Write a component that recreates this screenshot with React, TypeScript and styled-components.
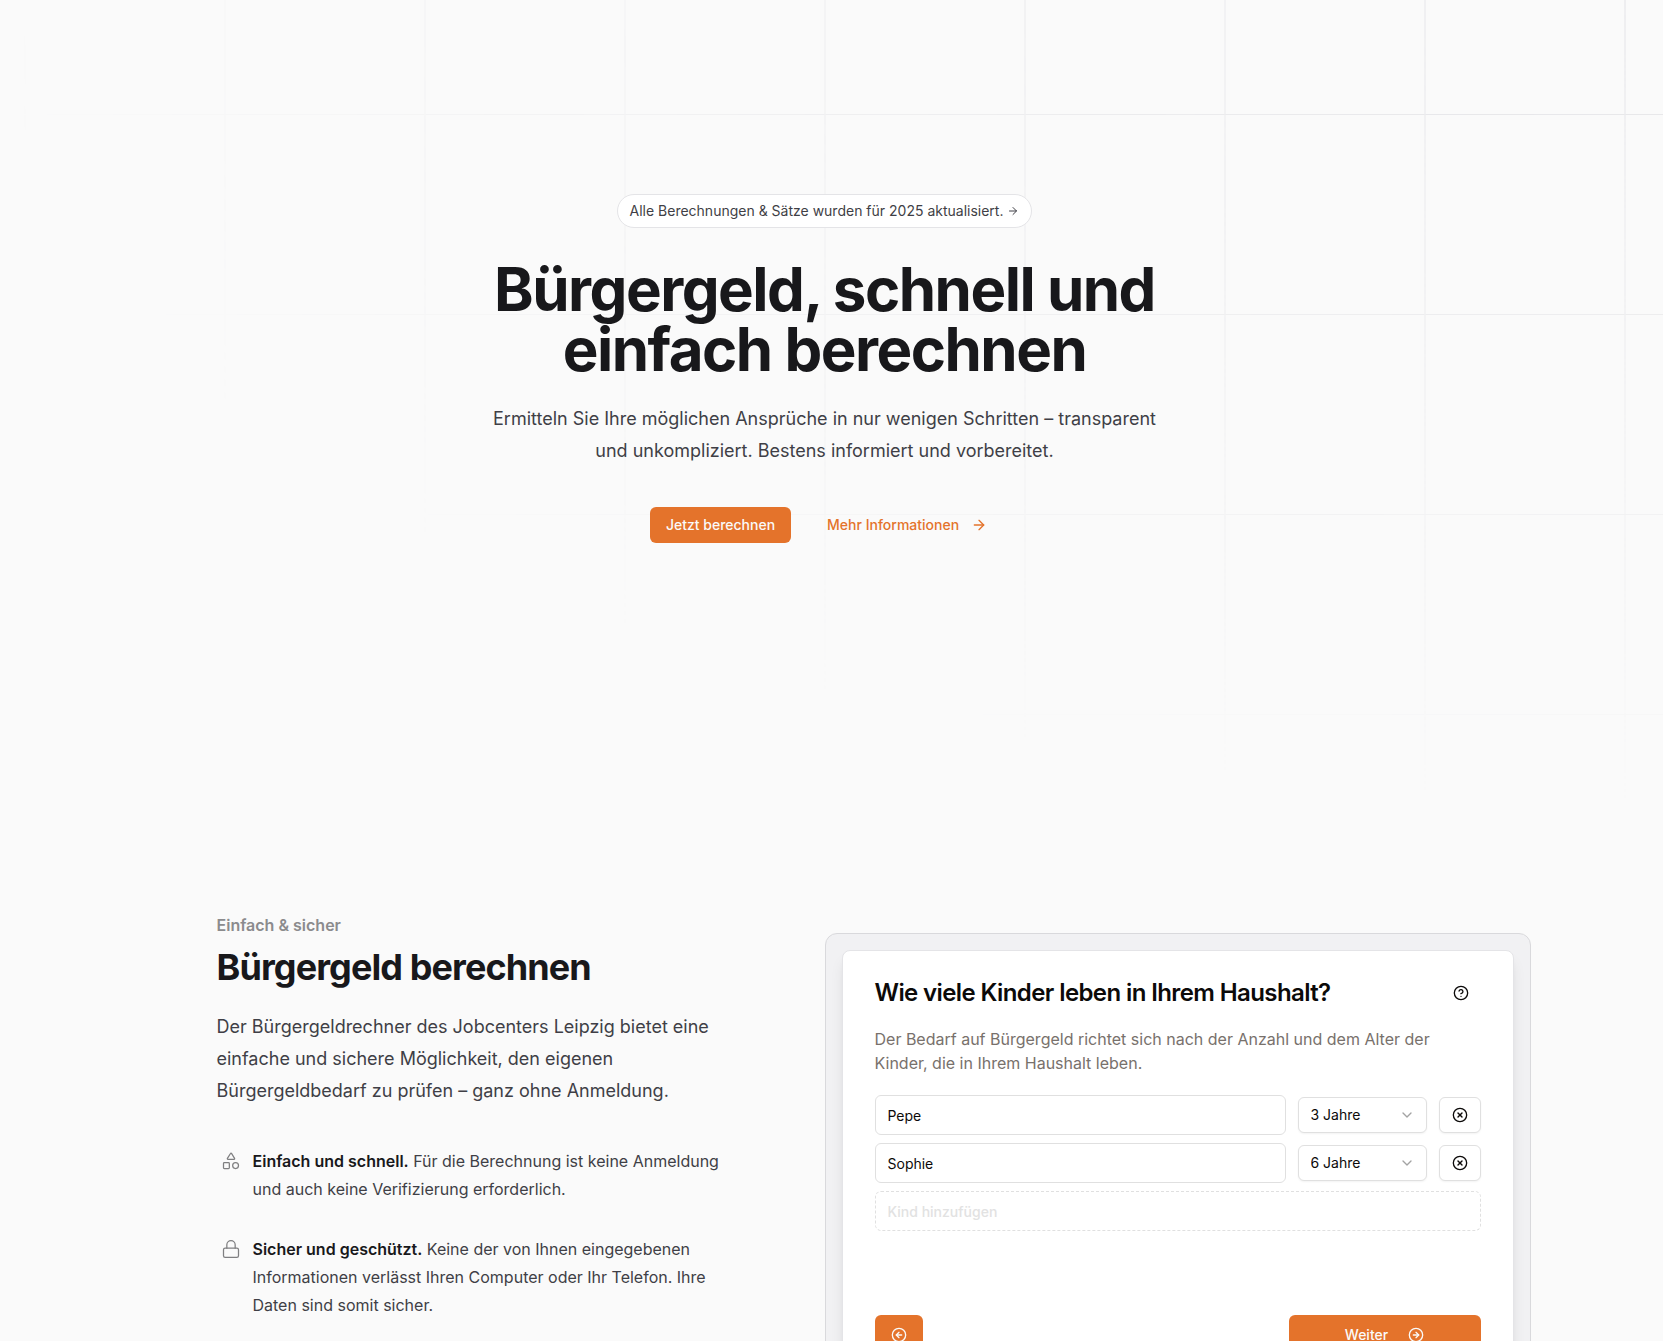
import React from 'react';
import styled, { createGlobalStyle } from 'styled-components';
import { ArrowRight, ChevronDown, CircleArrowLeft, CircleArrowRight, CircleHelp, CircleX, Lock, Shapes } from 'lucide-react';

const GlobalStyle = createGlobalStyle`
  *, *::before, *::after { box-sizing: border-box; }
  html { background: #fafafa; }
  body {
    margin: 0;
    background: #fafafa;
    color: #0c0a09;
    font-family: Inter, "Liberation Sans", sans-serif;
    font-size: 16px;
    line-height: 24px;
    -webkit-font-smoothing: antialiased;
  }
  h1, h2, h3, p, dl, dt, dd { margin: 0; }
  button, input, select { font: inherit; color: inherit; }
  a { color: inherit; text-decoration: none; }
`;

const Page = styled.div`
  position: relative;
  isolation: isolate;
  overflow: hidden;
  padding-right: 14px;
`;

const GridBackdrop = styled.svg`
  position: absolute;
  inset: 0;
  z-index: -1;
  width: 100%;
  height: 800px;
  stroke: #e4e4e7;
  mask-image: radial-gradient(100% 100% at top right, white, transparent);
`;

const Hero = styled.header`
  display: flex;
  flex-direction: column;
  align-items: center;
  max-width: 672px;
  margin: 0 auto;
  padding: 194px 0 368px;
  text-align: center;
`;

const Notice = styled.a`
  display: flex;
  align-items: center;
  gap: 4px;
  padding: 4px 12px;
  border: 1px solid #e4e4e7;
  border-radius: 17px;
  background: #ffffff;
  color: #3f3f46;
  font-size: 14px;
`;

const HeroTitle = styled.h1`
  margin-top: 31px;
  color: #18181b;
  font-size: 60px;
  font-weight: 700;
  line-height: 60px;
  letter-spacing: -0.025em;
`;

const Lead = styled.p`
  margin-top: 24px;
  color: #3f3f46;
  font-size: 18px;
  line-height: 32px;
`;

const Actions = styled.div`
  display: flex;
  align-items: center;
  gap: 20px;
  margin-top: 40px;
`;

const Button = styled.button<{ $wide?: boolean }>`
  display: inline-flex;
  align-items: center;
  justify-content: center;
  gap: 20px;
  height: ${p => (p.$wide === undefined ? 36 : 40)}px;
  width: ${p => (p.$wide === undefined ? 'auto' : p.$wide ? '192px' : '48px')};
  padding: 0 16px;
  border: 0;
  border-radius: 6px;
  background: #e4732b;
  color: #fafaf9;
  font-size: 14px;
  font-weight: 500;
`;

const TextLink = styled.a`
  display: inline-flex;
  align-items: center;
  gap: 12px;
  height: 36px;
  padding: 0 12px 0 16px;
  color: #e4732b;
  font-size: 14px;
  font-weight: 500;
`;

const Feature = styled.section`
  display: grid;
  grid-template-columns: minmax(0, 1fr) minmax(0, 1fr);
  max-width: 1280px;
  margin: 0 auto;
  padding: 0 32px 128px;
`;

const Intro = styled.div`
  max-width: 512px;
`;

const Eyebrow = styled.p`
  color: #8b8b8d;
  font-weight: 600;
  line-height: 28px;
`;

const Title = styled.h2`
  margin-top: 8px;
  color: #18181b;
  font-size: 36px;
  font-weight: 700;
  line-height: 40px;
  letter-spacing: -0.025em;
`;

const IntroText = styled(Lead)`
  margin-top: 24px;
`;

const Benefits = styled.dl`
  display: grid;
  gap: 32px;
  margin-top: 40px;
  color: #3f3f46;
  line-height: 28px;
`;

const Benefit = styled.div`
  position: relative;
  padding-left: 36px;

  svg {
    position: absolute;
    top: 4px;
    left: 4px;
    color: #7f7f81;
  }

  dt {
    display: inline;
    color: #18181b;
    font-weight: 600;
  }

  dd { display: inline; }
`;

const Frame = styled.div`
  width: 706px;
  margin-top: 22px;
  padding: 16px;
  border: 1px solid #d9d9dc;
  border-radius: 12px;
  background: #f1f1f3;
`;

const Card = styled.form`
  min-height: 480px;
  padding: 24px 32px;
  border: 1px solid #e4e4e7;
  border-radius: 8px;
  background: #ffffff;
  box-shadow: 0 10px 15px -3px rgba(0, 0, 0, 0.1), 0 4px 6px -4px rgba(0, 0, 0, 0.1);
`;

const CardHeader = styled.div`
  display: flex;
  align-items: center;
  justify-content: space-between;
`;

const Question = styled.h3`
  font-size: 24px;
  font-weight: 600;
  line-height: 36px;
  letter-spacing: -0.025em;
`;

const HelpButton = styled.button`
  display: flex;
  align-items: center;
  justify-content: center;
  width: 40px;
  height: 36px;
  padding: 0;
  border: 0;
  background: transparent;
`;

const Hint = styled.p`
  margin-top: 16px;
  color: #78716c;
`;

const Rows = styled.div`
  display: grid;
  gap: 8px;
  margin-top: 20px;
`;

const ChildRow = styled.div`
  display: flex;
  align-items: center;
  gap: 12px;
`;

const NameInput = styled.input`
  flex: 1;
  min-width: 0;
  height: 40px;
  padding: 0 12px;
  border: 1px solid #e0e0e0;
  border-radius: 6px;
  background: #ffffff;
  font-size: 14px;

  &::placeholder {
    color: #e2e2e2;
    opacity: 1;
  }
`;

const NewChildInput = styled(NameInput)`
  border-style: dashed;
  font-weight: 500;
`;

const AgeField = styled.div`
  display: grid;
  align-items: center;
  width: 129px;

  > * { grid-area: 1 / 1; }

  svg {
    justify-self: end;
    margin-right: 12px;
    color: #a3a3a3;
    pointer-events: none;
  }
`;

const AgeSelect = styled.select`
  appearance: none;
  width: 100%;
  height: 36px;
  padding: 0 12px;
  border: 1px solid #e0e0e0;
  border-radius: 6px;
  background: #ffffff;
  box-shadow: 0 1px 2px rgba(0, 0, 0, 0.05);
  font-size: 14px;
`;

const RemoveButton = styled.button`
  display: flex;
  align-items: center;
  justify-content: center;
  width: 42px;
  height: 36px;
  padding: 0;
  border: 1px solid #e0e0e0;
  border-radius: 6px;
  background: #ffffff;
  box-shadow: 0 1px 2px rgba(0, 0, 0, 0.05);
`;

const CardFooter = styled.div`
  display: flex;
  justify-content: space-between;
  margin-top: 84px;
`;

const children = [
  { name: 'Pepe', age: 3 },
  { name: 'Sophie', age: 6 },
];

const ages = Array.from({ length: 25 }, (_, age) => age);

export default function App() {
  return (
    <>
      <GlobalStyle />
      <Page>
        <GridBackdrop aria-hidden="true">
          <defs>
            <pattern
              id="hero-grid"
              width="200"
              height="200"
              x="50%"
              y="-86"
              patternUnits="userSpaceOnUse"
              patternTransform="translate(-7 0)"
            >
              <path d="M.5 200V.5H200" fill="none" />
            </pattern>
          </defs>
          <rect width="100%" height="100%" strokeWidth="0" fill="url(#hero-grid)" />
        </GridBackdrop>

        <Hero>
          <Notice href="#neuigkeiten">
            Alle Berechnungen &amp; Sätze wurden für 2025 aktualisiert.
            <ArrowRight size={12} aria-hidden="true" />
          </Notice>
          <HeroTitle>Bürgergeld, schnell und einfach berechnen</HeroTitle>
          <Lead>
            Ermitteln Sie Ihre möglichen Ansprüche in nur wenigen Schritten – transparent und
            unkompliziert. Bestens informiert und vorbereitet.
          </Lead>
          <Actions>
            <Button type="button">Jetzt berechnen</Button>
            <TextLink href="#informationen">
              Mehr Informationen
              <ArrowRight size={16} aria-hidden="true" />
            </TextLink>
          </Actions>
        </Hero>

        <Feature id="informationen">
          <Intro>
            <Eyebrow>Einfach &amp; sicher</Eyebrow>
            <Title>Bürgergeld berechnen</Title>
            <IntroText>
              Der Bürgergeldrechner des Jobcenters Leipzig bietet eine einfache und sichere
              Möglichkeit, den eigenen Bürgergeldbedarf zu prüfen – ganz ohne Anmeldung.
            </IntroText>
            <Benefits>
              <Benefit>
                <dt>
                  <Shapes size={20} strokeWidth={1.5} aria-hidden="true" />
                  Einfach und schnell.
                </dt>{' '}
                <dd>Für die Berechnung ist keine Anmeldung und auch keine Verifizierung erforderlich.</dd>
              </Benefit>
              <Benefit>
                <dt>
                  <Lock size={20} strokeWidth={1.5} aria-hidden="true" />
                  Sicher und geschützt.
                </dt>{' '}
                <dd>
                  Keine der von Ihnen eingegebenen Informationen verlässt Ihren Computer oder Ihr
                  Telefon. Ihre Daten sind somit sicher.
                </dd>
              </Benefit>
            </Benefits>
          </Intro>

          <Frame>
            <Card onSubmit={event => event.preventDefault()}>
              <CardHeader>
                <Question>Wie viele Kinder leben in Ihrem Haushalt?</Question>
                <HelpButton type="button" aria-label="Hilfe">
                  <CircleHelp size={16} aria-hidden="true" />
                </HelpButton>
              </CardHeader>
              <Hint>
                Der Bedarf auf Bürgergeld richtet sich nach der Anzahl und dem Alter der Kinder, die
                in Ihrem Haushalt leben.
              </Hint>
              <Rows>
                {children.map(child => (
                  <ChildRow key={child.name}>
                    <NameInput aria-label="Name des Kindes" defaultValue={child.name} />
                    <AgeField>
                      <AgeSelect aria-label={`Alter von ${child.name}`} defaultValue={child.age}>
                        {ages.map(age => (
                          <option key={age} value={age}>{age} Jahre</option>
                        ))}
                      </AgeSelect>
                      <ChevronDown size={16} aria-hidden="true" />
                    </AgeField>
                    <RemoveButton type="button" aria-label={`${child.name} entfernen`}>
                      <CircleX size={16} aria-hidden="true" />
                    </RemoveButton>
                  </ChildRow>
                ))}
                <NewChildInput aria-label="Kind hinzufügen" placeholder="Kind hinzufügen" />
              </Rows>
              <CardFooter>
                <Button type="button" $wide={false} aria-label="Zurück">
                  <CircleArrowLeft size={16} aria-hidden="true" />
                </Button>
                <Button type="submit" $wide>
                  Weiter
                  <CircleArrowRight size={16} aria-hidden="true" />
                </Button>
              </CardFooter>
            </Card>
          </Frame>
        </Feature>
      </Page>
    </>
  );
}
